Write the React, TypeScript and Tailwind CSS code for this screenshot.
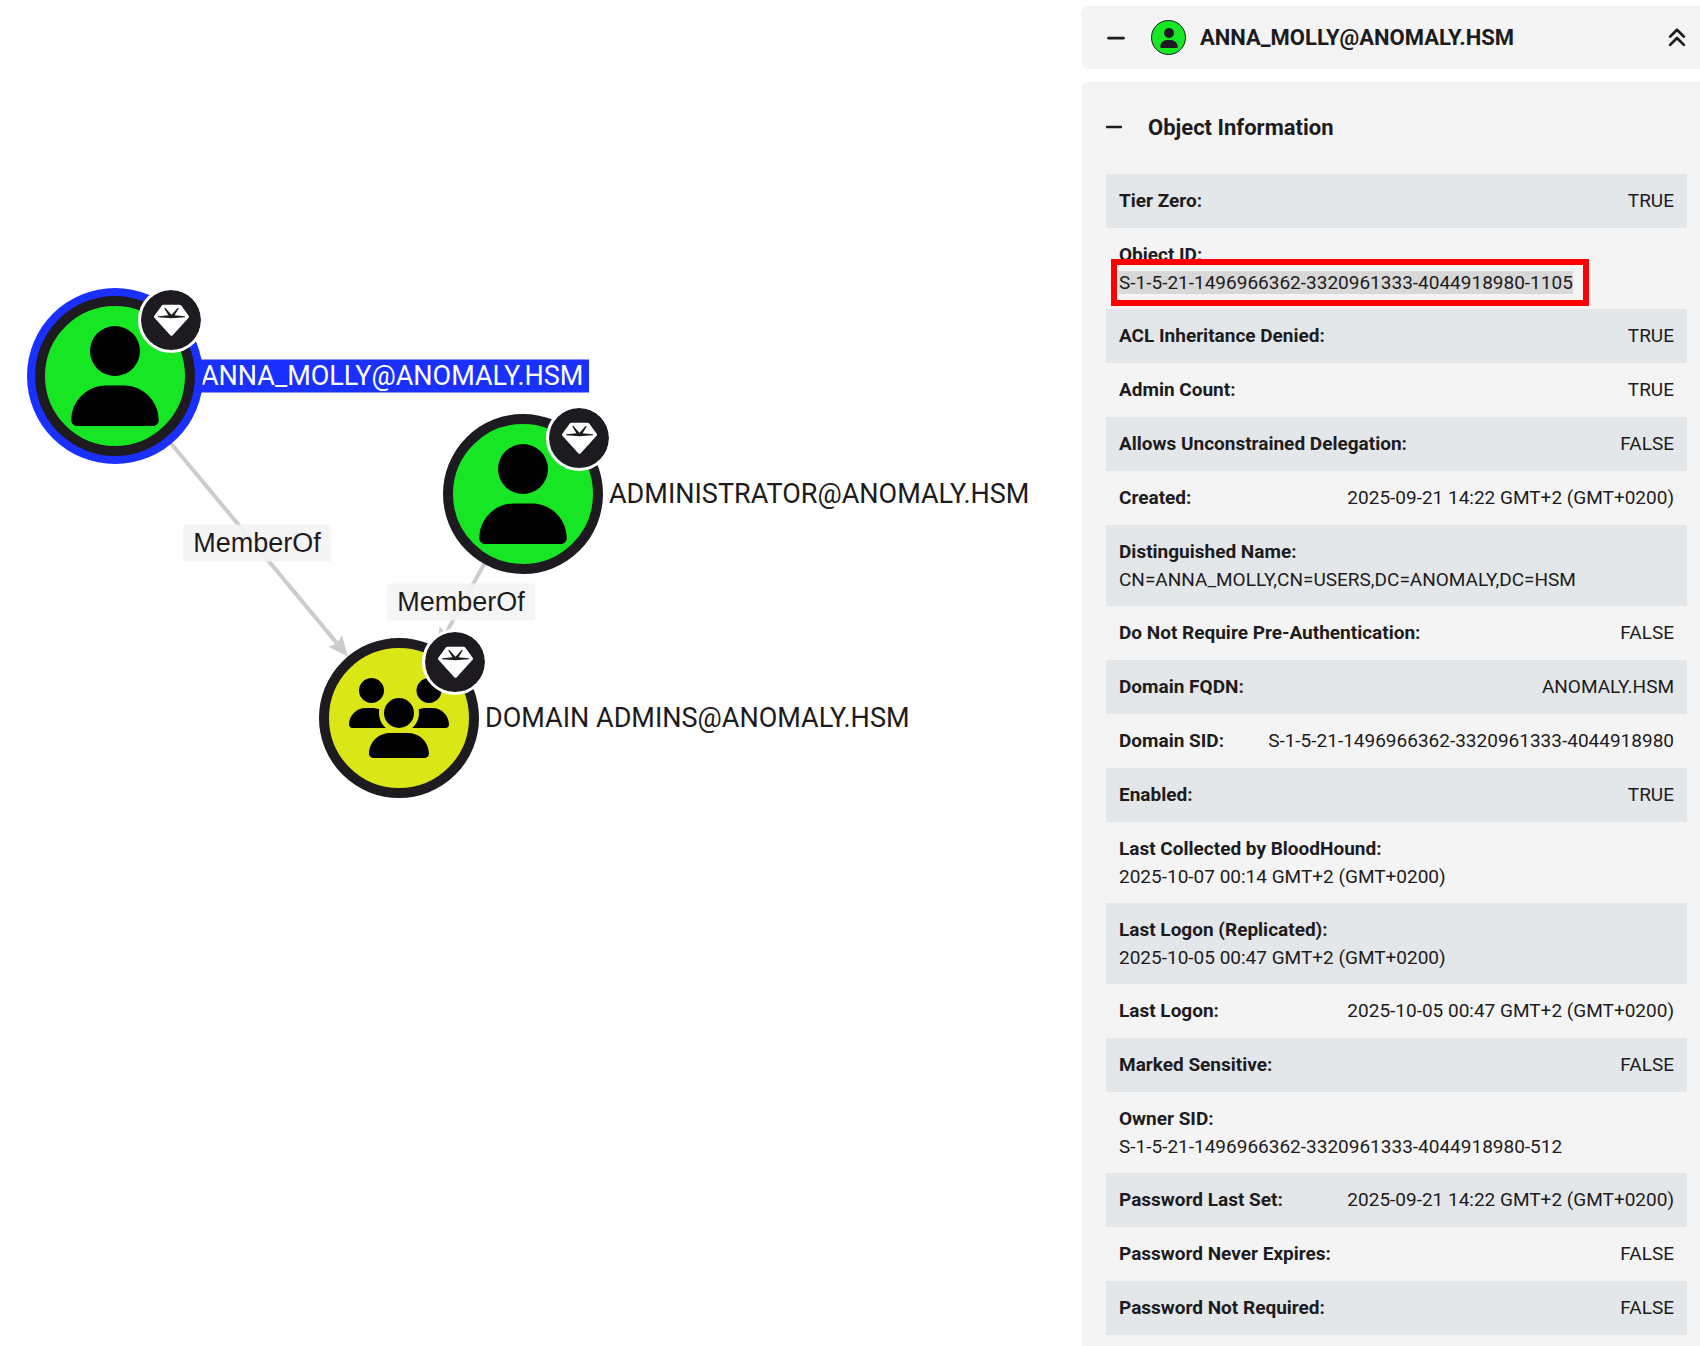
import { useState } from 'react'
import { FaAnglesUp, FaGem, FaMinus, FaPlus, FaUser, FaUsers } from 'react-icons/fa6'

interface GraphNode {
  id: string
  kind: 'user' | 'group'
  x: number
  y: number
}

interface GraphEdge {
  from: string
  to: string
  label: string
}

interface Field {
  label: string
  value: string
  stacked?: boolean
  marked?: boolean
}

const NODE_RADIUS = 80

const nodes: GraphNode[] = [
  { id: 'ANNA_MOLLY@ANOMALY.HSM', kind: 'user', x: 115, y: 376 },
  { id: 'ADMINISTRATOR@ANOMALY.HSM', kind: 'user', x: 523, y: 494 },
  { id: 'DOMAIN ADMINS@ANOMALY.HSM', kind: 'group', x: 399, y: 718 },
]

const edges: GraphEdge[] = [
  { from: 'ANNA_MOLLY@ANOMALY.HSM', to: 'DOMAIN ADMINS@ANOMALY.HSM', label: 'MemberOf' },
  { from: 'ADMINISTRATOR@ANOMALY.HSM', to: 'DOMAIN ADMINS@ANOMALY.HSM', label: 'MemberOf' },
]

const fields: Field[] = [
  { label: 'Tier Zero', value: 'TRUE' },
  { label: 'Object ID', value: 'S-1-5-21-1496966362-3320961333-4044918980-1105', stacked: true, marked: true },
  { label: 'ACL Inheritance Denied', value: 'TRUE' },
  { label: 'Admin Count', value: 'TRUE' },
  { label: 'Allows Unconstrained Delegation', value: 'FALSE' },
  { label: 'Created', value: '2025-09-21 14:22 GMT+2 (GMT+0200)' },
  { label: 'Distinguished Name', value: 'CN=ANNA_MOLLY,CN=USERS,DC=ANOMALY,DC=HSM', stacked: true },
  { label: 'Do Not Require Pre-Authentication', value: 'FALSE' },
  { label: 'Domain FQDN', value: 'ANOMALY.HSM' },
  { label: 'Domain SID', value: 'S-1-5-21-1496966362-3320961333-4044918980' },
  { label: 'Enabled', value: 'TRUE' },
  { label: 'Last Collected by BloodHound', value: '2025-10-07 00:14 GMT+2 (GMT+0200)', stacked: true },
  { label: 'Last Logon (Replicated)', value: '2025-10-05 00:47 GMT+2 (GMT+0200)', stacked: true },
  { label: 'Last Logon', value: '2025-10-05 00:47 GMT+2 (GMT+0200)' },
  { label: 'Marked Sensitive', value: 'FALSE' },
  { label: 'Owner SID', value: 'S-1-5-21-1496966362-3320961333-4044918980-512', stacked: true },
  { label: 'Password Last Set', value: '2025-09-21 14:22 GMT+2 (GMT+0200)' },
  { label: 'Password Never Expires', value: 'FALSE' },
  { label: 'Password Not Required', value: 'FALSE' },
]

function edgeGeometry(edge: GraphEdge) {
  const a = nodes.find(n => n.id === edge.from)!
  const b = nodes.find(n => n.id === edge.to)!
  const len = Math.hypot(b.x - a.x, b.y - a.y)
  const ux = (b.x - a.x) / len
  const uy = (b.y - a.y) / len
  const tip = { x: b.x - ux * NODE_RADIUS, y: b.y - uy * NODE_RADIUS }
  const back = { x: tip.x - ux * 20, y: tip.y - uy * 20 }
  const notch = { x: tip.x - ux * 17, y: tip.y - uy * 17 }
  const arrow = [
    [tip.x, tip.y],
    [back.x - uy * 9, back.y + ux * 9],
    [notch.x, notch.y],
    [back.x + uy * 9, back.y - ux * 9],
  ].map(p => p.join(',')).join(' ')
  return { a, b, notch, arrow }
}

function Node({ node, selected, onSelect }: { node: GraphNode; selected: boolean; onSelect: () => void }) {
  return (
    <button
      onClick={onSelect}
      className="absolute size-40 -translate-x-1/2 -translate-y-1/2 cursor-pointer"
      style={{ left: node.x, top: node.y }}
    >
      <span className={`absolute left-[150px] top-1/2 -translate-y-1/2 whitespace-nowrap pl-4 pr-1.5 text-[27px] leading-[33px] ${selected ? 'bg-[#1a30ff] text-white' : ''}`}>
        {node.id}
      </span>
      <span className={`relative flex size-40 items-center justify-center rounded-full border-10 border-[#1d1b20] text-black ${node.kind === 'user' ? 'bg-[#17e625]' : 'bg-[#dbe617]'} ${selected ? 'ring-8 ring-[#1a30ff]' : ''}`}>
        {node.kind === 'user' ? <FaUser className="size-[100px]" /> : <FaUsers className="size-[100px]" />}
      </span>
      <span className="absolute -right-[9px] -top-[9px] flex size-[66px] items-center justify-center rounded-full border-3 border-white bg-[#1d1b20] bg-clip-padding text-white">
        <FaGem className="size-[35px]" />
      </span>
    </button>
  )
}

function Graph({ selected, onSelect }: { selected: string; onSelect: (id: string) => void }) {
  return (
    <main className="relative min-w-0 flex-1 overflow-hidden">
      <svg className="absolute inset-0 size-full" aria-hidden="true">
        {edges.map(edge => {
          const { a, notch, arrow } = edgeGeometry(edge)
          return (
            <g key={edge.from}>
              <line x1={a.x} y1={a.y} x2={notch.x} y2={notch.y} stroke="#cccccc" strokeWidth={4} />
              <polygon points={arrow} fill="#cccccc" />
            </g>
          )
        })}
      </svg>
      {edges.map(edge => {
        const { a, b } = edgeGeometry(edge)
        return (
          <span
            key={edge.from}
            className="absolute -translate-x-1/2 -translate-y-1/2 bg-[#f4f4f4]/90 px-2.5 font-['Liberation_Sans',Arial,sans-serif] text-[27px] leading-[37px]"
            style={{ left: (a.x + b.x) / 2, top: (a.y + b.y) / 2 - 4 }}
          >
            {edge.label}
          </span>
        )
      })}
      {nodes.map(n => (
        <Node key={n.id} node={n} selected={n.id === selected} onSelect={() => onSelect(n.id)} />
      ))}
    </main>
  )
}

function FieldRow({ field }: { field: Field }) {
  return (
    <div className={`px-[13px] pt-[13px] odd:bg-[#e3e7ea] ${field.stacked ? 'pb-3' : 'flex justify-between gap-4 pb-[13px]'}`}>
      <dt className="font-bold">{field.label}:</dt>
      <dd>
        {field.marked ? (
          <span className="relative bg-[#d8d8d8]">
            {field.value}
            <span className="absolute -inset-y-3 -left-2 -right-4 border-6 border-[#ff0000]" />
          </span>
        ) : (
          field.value
        )}
      </dd>
    </div>
  )
}

export default function App() {
  const [selected, setSelected] = useState(nodes[0].id)
  const [open, setOpen] = useState(true)
  const [infoOpen, setInfoOpen] = useState(true)

  const selectedNode = nodes.find(n => n.id === selected)!

  return (
    <div className="flex min-h-screen bg-white font-[Roboto,sans-serif] text-[#1d1b20]">
      <Graph selected={selected} onSelect={setSelected} />

      <aside className="flex w-[619px] shrink-0 flex-col gap-[13px] pt-1.5">
        <header className="flex h-[63px] items-center rounded-l-lg bg-[#f4f4f4] pl-6 pr-3">
          <button aria-label="Toggle panel" onClick={() => setOpen(!open)}>
            {open ? <FaMinus size={22} /> : <FaPlus size={22} />}
          </button>
          <span className={`ml-6 flex size-[35px] items-center justify-center rounded-full border border-[#1d1b20] ${selectedNode.kind === 'user' ? 'bg-[#17e625]' : 'bg-[#dbe617]'}`}>
            {selectedNode.kind === 'user' ? <FaUser size={20} /> : <FaUsers size={20} />}
          </span>
          <h1 className="ml-3.5 flex-1 truncate text-[22px] font-bold">{selected}</h1>
          <button aria-label="Collapse all" onClick={() => setInfoOpen(false)}>
            <FaAnglesUp size={22} />
          </button>
        </header>

        {open && (
          <section className="flex-1 rounded-tl-lg bg-[#f4f4f4]">
            <h2 className="pb-0.5">
              <button onClick={() => setInfoOpen(!infoOpen)} className="flex h-[90px] w-full items-center gap-6 pl-[23px] text-[22px] font-bold">
                {infoOpen ? <FaMinus size={20} /> : <FaPlus size={20} />}
                Object Information
              </button>
            </h2>
            {infoOpen && (
              <dl className="ml-[25px] mr-[13px] text-[19px] leading-7">
                {fields.map(f => <FieldRow key={f.label} field={f} />)}
              </dl>
            )}
          </section>
        )}
      </aside>
    </div>
  )
}
